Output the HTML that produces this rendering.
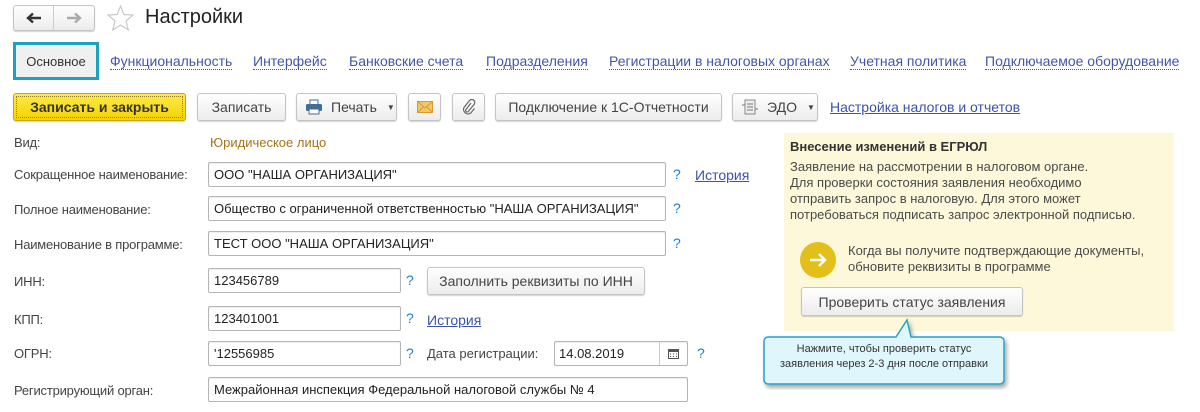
<!DOCTYPE html>
<html><head><meta charset="utf-8"><style>
*{box-sizing:border-box;margin:0;padding:0}
body{width:1200px;height:412px;background:#fff;font-family:"Liberation Sans",sans-serif;font-size:13px;color:#333;position:relative;overflow:hidden}
.a{position:absolute;white-space:nowrap}
.btn{position:absolute;border:1px solid #c4c4c4;border-radius:3px;background:linear-gradient(#fff,#ececec);box-shadow:0 1px 1px rgba(0,0,0,.18);color:#444;display:flex;align-items:center;justify-content:center;font-size:13px}
.tab{position:absolute;top:53px;color:#4355a8;border-bottom:1px dotted #4355a8;line-height:16px;font-size:14px;white-space:nowrap}
.inp{position:absolute;border:1px solid #b5b5b5;border-radius:2px;background:#fff;height:25px;padding-left:5px;line-height:23px;color:#222;font-size:13px;white-space:nowrap;box-shadow:inset 0 1px 1px rgba(0,0,0,.08)}
.lbl{position:absolute;left:14px;color:#444;font-size:13px;white-space:nowrap;letter-spacing:-.2px}
.q{position:absolute;color:#1d7fd0;font-size:14px}
.lnk{position:absolute;color:#3a52b0;text-decoration:underline;font-size:13px}
</style></head><body>
<div class="btn" style="left:13px;top:5px;width:82px;height:26px;justify-content:flex-start;padding:0">
 <div style="width:40px;height:24px;border-right:1px solid #ccc;display:flex;align-items:center;justify-content:center"><svg width="16" height="12"><path d="M15 6H3M7 1.5L2 6l5 4.5" stroke="#333" stroke-width="2.4" fill="none"/></svg></div>
 <div style="width:40px;height:24px;display:flex;align-items:center;justify-content:center"><svg width="16" height="12"><path d="M1 6h12M9 1.5L14 6l-5 4.5" stroke="#aaa" stroke-width="2.4" fill="none"/></svg></div>
</div>
<svg class="a" style="left:107px;top:5px" width="27" height="26" viewBox="0 0 27 26"><polygon points="13.5,1 16.8,9.5 26,10 19,16 21.3,25 13.5,20 5.7,25 8,16 1,10 10.2,9.5" fill="none" stroke="#c8c8c8" stroke-width="1.2"/></svg>
<div class="a" style="left:145px;top:6px;font-size:20px;color:#222">Настройки</div>

<div class="a" style="left:13px;top:42px;width:86px;height:38px;border:3px solid #1ea0c0;background:#f0f0f0;display:flex;align-items:center;justify-content:center;color:#333">Основное</div>
<div class="tab" style="left:110px">Функциональность</div>
<div class="tab" style="left:253px">Интерфейс</div>
<div class="tab" style="left:349px">Банковские счета</div>
<div class="tab" style="left:486px">Подразделения</div>
<div class="tab" style="left:609px">Регистрации в налоговых органах</div>
<div class="tab" style="left:850px">Учетная политика</div>
<div class="tab" style="left:985px">Подключаемое оборудование</div>

<div class="btn" style="left:13px;top:93px;width:173px;height:28px;background:linear-gradient(#ffe94a,#f5d300);border-color:#c9a800;font-weight:bold;font-size:14px;color:#333;outline:1px dotted #8a7a30;outline-offset:-4px">Записать и закрыть</div>
<div class="btn" style="left:197px;top:93px;width:89px;height:28px;font-size:14px">Записать</div>
<div class="btn" style="left:296px;top:93px;width:101px;height:28px;justify-content:flex-start;padding-left:8px;font-size:14px">
<svg width="18" height="16" viewBox="0 0 18 16"><rect x="5" y="1" width="8" height="5" fill="#fff" stroke="#4a6c8c"/><rect x="1" y="5" width="16" height="7" rx="1.5" fill="#3f6d99"/><rect x="4" y="10" width="10" height="5" fill="#fff" stroke="#4a6c8c"/></svg>
<span style="margin-left:8px">Печать</span><span style="margin-left:10px;font-size:8px">&#9660;</span></div>
<div class="btn" style="left:408px;top:93px;width:33px;height:28px"><svg width="16" height="12"><rect x=".5" y=".5" width="15" height="11" fill="#f6c56a" stroke="#d89a30"/><path d="M.5 .5L8 7 15.5 .5M.5 11.5L6 6M15.5 11.5L10 6" stroke="#d89a30" fill="none"/></svg></div>
<div class="btn" style="left:452px;top:93px;width:33px;height:28px"><svg width="14" height="16" viewBox="0 0 14 16"><path d="M9 4L4 10.5a1.5 1.5 0 0 0 2.3 2L12 5.5a3 3 0 0 0-4.5-4L2 8.5a4.5 4.5 0 0 0 6.8 5.5L12.5 9.5" fill="none" stroke="#666" stroke-width="1.2"/></svg></div>
<div class="btn" style="left:495px;top:93px;width:227px;height:28px;font-size:14px">Подключение к 1С-Отчетности</div>
<div class="btn" style="left:732px;top:93px;width:86px;height:28px;justify-content:flex-start;padding-left:8px;font-size:14px">
<svg width="18" height="16"><rect x="4" y="1" width="10" height="14" fill="#eee" stroke="#888"/><path d="M6 5h6M6 8h6M6 11h6" stroke="#777"/><path d="M1 6h3M14 10h3" stroke="#777"/></svg>
<span style="margin-left:8px">ЭДО</span><span style="margin-left:10px;font-size:8px">&#9660;</span></div>
<div class="lnk" style="left:830px;top:99px;font-size:14px">Настройка налогов и отчетов</div>

<div class="lbl" style="top:135px">Вид:</div>
<div class="a" style="left:210px;top:135px;color:#a3741a">Юридическое лицо</div>

<div class="lbl" style="top:167px">Сокращенное наименование:</div>
<div class="inp" style="left:208px;top:162px;width:458px">ООО "НАША ОРГАНИЗАЦИЯ"</div>
<div class="q" style="left:673px;top:166px">?</div>
<div class="lnk" style="left:695px;top:167px;font-size:14px">История</div>

<div class="lbl" style="top:202px">Полное наименование:</div>
<div class="inp" style="left:208px;top:196px;width:458px">Общество с ограниченной ответственностью "НАША ОРГАНИЗАЦИЯ"</div>
<div class="q" style="left:673px;top:200px">?</div>

<div class="lbl" style="top:237px">Наименование в программе:</div>
<div class="inp" style="left:208px;top:231px;width:458px">ТЕСТ ООО "НАША ОРГАНИЗАЦИЯ"</div>
<div class="q" style="left:673px;top:235px">?</div>

<div class="lbl" style="top:274px">ИНН:</div>
<div class="inp" style="left:208px;top:268px;width:193px">123456789</div>
<div class="q" style="left:406px;top:272px">?</div>
<div class="btn" style="left:427px;top:267px;width:218px;height:28px;font-size:14px">Заполнить реквизиты по ИНН</div>

<div class="lbl" style="top:312px">КПП:</div>
<div class="inp" style="left:208px;top:306px;width:193px">123401001</div>
<div class="q" style="left:406px;top:310px">?</div>
<div class="lnk" style="left:427px;top:312px;font-size:14px">История</div>

<div class="lbl" style="top:346px">ОГРН:</div>
<div class="inp" style="left:208px;top:341px;width:193px">'12556985</div>
<div class="q" style="left:406px;top:345px">?</div>
<div class="a" style="left:427px;top:346px;color:#444">Дата регистрации:</div>
<div class="inp" style="left:554px;top:341px;width:134px;padding-left:4px">14.08.2019</div>
<div class="a" style="left:659px;top:342px;width:28px;height:23px;border-left:1px solid #ccc;display:flex;align-items:center;justify-content:center"><svg width="11" height="11"><rect x=".5" y="1.5" width="10" height="9" fill="#fff" stroke="#555"/><rect x="0" y="1" width="11" height="3" fill="#555"/><path d="M2 6h1M5 6h1M8 6h1M2 8.5h1M5 8.5h1M8 8.5h1" stroke="#555"/></svg></div>
<div class="q" style="left:697px;top:345px">?</div>

<div class="lbl" style="top:383px">Регистрирующий орган:</div>
<div class="inp" style="left:208px;top:377px;width:480px">Межрайонная инспекция Федеральной налоговой службы № 4</div>

<div class="a" style="left:784px;top:133px;width:390px;height:198px;background:#fdf8d9"></div>
<div class="a" style="left:790px;top:139px;font-weight:bold;font-size:13px;color:#333">Внесение изменений в ЕГРЮЛ</div>
<div class="a" style="left:790px;top:159px;font-size:13px;line-height:16px;color:#4a4a4a">Заявление на рассмотрении в налоговом органе.<br>Для проверки состояния заявления необходимо<br>отправить запрос в налоговую. Для этого может<br>потребоваться подписать запрос электронной подписью.</div>
<div class="a" style="left:800px;top:242px;width:36px;height:36px;border-radius:50%;background:#e2bf1a;display:flex;align-items:center;justify-content:center"><svg width="20" height="16"><path d="M2 8h15M11 2l6 6-6 6" stroke="#fff" stroke-width="2.5" fill="none"/></svg></div>
<div class="a" style="left:848px;top:243px;font-size:13px;line-height:16px;color:#4a4a4a">Когда вы получите подтверждающие документы,<br>обновите реквизиты в программе</div>
<div class="btn" style="left:801px;top:287px;width:222px;height:29px;font-size:14px">Проверить статус заявления</div>

<svg class="a" style="left:760px;top:318px" width="250" height="72"><defs><filter id="s"><feDropShadow dx="2" dy="3" stdDeviation="2" flood-opacity=".35"/></filter></defs>
<path d="M8 19H136L147 2 151 19H240a4 4 0 0 1 4 4V62a4 4 0 0 1-4 4H8a4 4 0 0 1-4-4V23a4 4 0 0 1 4-4Z" fill="#dff6fd" stroke="#2b9fc6" stroke-width="1.5" filter="url(#s)"/></svg>
<div class="a" style="left:764px;top:342px;width:240px;text-align:center;font-size:11px;line-height:15px;color:#333">Нажмите, чтобы проверить статус<br>заявления через 2-3 дня после отправки</div>
</body></html>
